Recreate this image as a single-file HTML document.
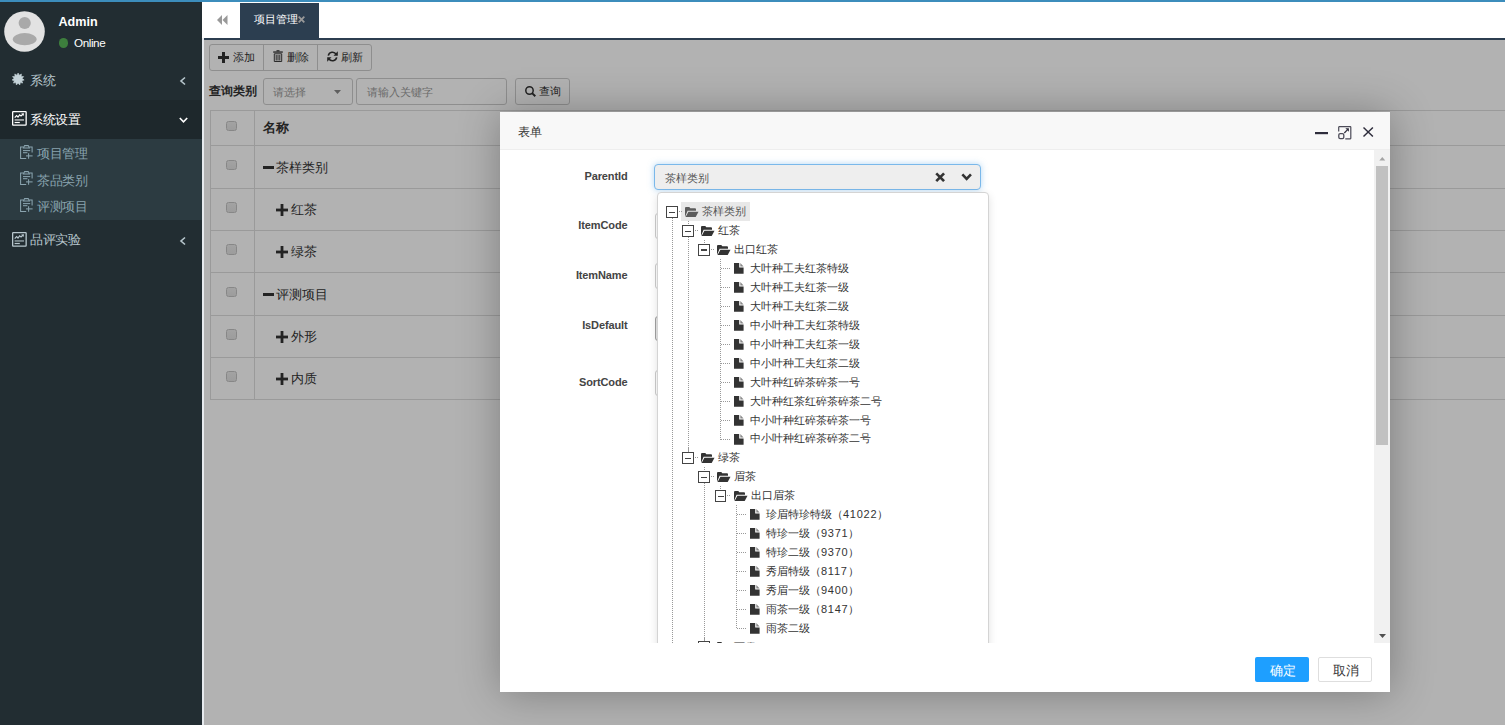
<!DOCTYPE html><html><head><meta charset="utf-8"><title>UI</title><style>
*{margin:0;padding:0;box-sizing:border-box}
html,body{width:1505px;height:725px;overflow:hidden}
body{position:relative;font-family:"Liberation Sans",sans-serif;background:#fff;color:#333}
.ab{position:absolute}
.t{position:absolute;white-space:nowrap}
svg{position:absolute;overflow:visible}
.tr{position:absolute;left:0;width:1301px;border-top:1px solid #ddd}
.cb{position:absolute;left:22px;width:10.8px;height:10.9px;border:1px solid #c2c2c2;border-radius:2.5px;background:linear-gradient(#e9e9e9,#e0e0e0)}
.rowt{position:absolute;font-size:12.6px;line-height:16px;color:#333;white-space:nowrap}
.lbl{position:absolute;width:130px;left:0;text-align:right;font-size:11px;font-weight:bold;line-height:14px;color:#444;letter-spacing:-0.12px}
.inp{position:absolute;left:154.5px;width:326px;height:26px;border:1px solid #ccc;border-radius:3px;background:#fff}
.tn{position:absolute;font-size:10.8px;line-height:14px;color:#333;white-space:nowrap}
.sw{position:absolute;width:12px;height:12px;border:1px solid #444;background:#fff}
.sw:after{content:"";position:absolute;left:2px;top:4.5px;width:6px;height:1.3px;background:#444}
.vl{position:absolute;width:1px;border-left:1px dotted #777}
.hl{position:absolute;height:1px;border-top:1px dotted #777}
</style></head><body>
<div class="ab" style="left:0;top:0;width:1505px;height:2px;background:#3c8dbc"></div>
<div class="ab" style="left:0;top:2px;width:202px;height:723px;background:#222d32"></div>
<svg style="left:4px;top:11px" width="41" height="41" viewBox="0 0 41 41"><circle cx="20.5" cy="20.5" r="20.3" fill="#e2e2e2"/><circle cx="20.7" cy="12" r="6.1" fill="#a9a9a9"/><ellipse cx="20.7" cy="28.2" rx="11.9" ry="6.1" fill="#a9a9a9"/></svg>
<div class="t" style="left:58.4px;top:15px;font-size:12.6px;line-height:14px;font-weight:bold;color:#fff">Admin</div>
<div class="ab" style="left:58.6px;top:38.2px;width:9.5px;height:9.5px;border-radius:50%;background:#3d7e3d"></div>
<div class="t" style="left:74px;top:36.2px;font-size:11.7px;line-height:13px;letter-spacing:-0.42px;color:#fff">Online</div>
<div class="ab" style="left:0;top:100px;width:202px;height:39px;background:#1e282c"></div>
<div class="ab" style="left:0;top:139px;width:202px;height:81px;background:#2c3b41"></div>
<div class="t" style="left:30px;top:73px;font-size:12.6px;line-height:16px;letter-spacing:-0.3px;color:#b8c7ce">系统</div>
<div class="t" style="left:30px;top:112px;font-size:12.6px;line-height:16px;letter-spacing:-0.3px;color:#fff">系统设置</div>
<div class="t" style="left:30px;top:232px;font-size:12.6px;line-height:16px;letter-spacing:-0.3px;color:#b8c7ce">品评实验</div>
<div class="t" style="left:37px;top:146px;font-size:12.6px;line-height:16px;letter-spacing:-0.3px;color:#8aa4af">项目管理</div>
<div class="t" style="left:37px;top:172.5px;font-size:12.6px;line-height:16px;letter-spacing:-0.3px;color:#8aa4af">茶品类别</div>
<div class="t" style="left:37px;top:199px;font-size:12.6px;line-height:16px;letter-spacing:-0.3px;color:#8aa4af">评测项目</div>
<svg style="left:12.2px;top:73.3px" width="12.2" height="12.2" viewBox="0 0 12.2 12.2"><polygon points="6.10,0.00 7.26,2.17 9.40,0.97 9.20,3.42 11.65,3.57 10.16,5.52 12.14,6.97 9.83,7.80 10.71,10.09 8.32,9.55 7.82,11.95 6.10,10.20 4.38,11.95 3.88,9.55 1.49,10.09 2.37,7.80 0.06,6.97 2.04,5.52 0.55,3.57 3.00,3.42 2.80,0.97 4.94,2.17" fill="#c5d3d9" stroke="#c5d3d9" stroke-width="0.6" stroke-linejoin="round"/></svg>
<svg style="left:11.8px;top:111.2px" width="14.8" height="14.8" viewBox="0 0 14.8 14.8"><rect x="0.65" y="0.65" width="13.5" height="13.5" rx="0.6" fill="none" stroke="#fff" stroke-width="1.3"/><polyline points="2.7,6.6 4.6,4.6 6,6 7.6,3.9 9,5 10.9,3.2" fill="none" stroke="#fff" stroke-width="1.2"/><polygon points="9.2,2.4 12,2.2 11.6,5" fill="#fff"/><rect x="2.6" y="8.2" width="9.4" height="1.5" fill="#fff" opacity="0.7"/><rect x="2.6" y="10.9" width="5.2" height="1.2" fill="#fff"/></svg>
<svg style="left:11.8px;top:232px" width="14.8" height="14.8" viewBox="0 0 14.8 14.8"><rect x="0.65" y="0.65" width="13.5" height="13.5" rx="0.6" fill="none" stroke="#b8c7ce" stroke-width="1.3"/><polyline points="2.7,6.6 4.6,4.6 6,6 7.6,3.9 9,5 10.9,3.2" fill="none" stroke="#b8c7ce" stroke-width="1.2"/><polygon points="9.2,2.4 12,2.2 11.6,5" fill="#b8c7ce"/><rect x="2.6" y="8.2" width="9.4" height="1.5" fill="#b8c7ce" opacity="0.7"/><rect x="2.6" y="10.9" width="5.2" height="1.2" fill="#b8c7ce"/></svg>
<svg style="left:20px;top:144.8px" width="13" height="14" viewBox="0 0 13 14" fill="none" stroke="#8aa4af" stroke-width="1.05"><path d="M3.6 1.9 H0.6 V13.4 H6.2"/><path d="M9.2 1.9 H12.1 V7.6"/><path d="M3.4 3 L4.6 0.6 H8.2 L9.4 3 Z"/><path d="M3 5.6 H10.2"/><path d="M3 7.7 H7.4"/><path d="M8.6 8.2 V13.8"/><path d="M6 10.9 H12.6"/></svg>
<svg style="left:20px;top:171.3px" width="13" height="14" viewBox="0 0 13 14" fill="none" stroke="#8aa4af" stroke-width="1.05"><path d="M3.6 1.9 H0.6 V13.4 H6.2"/><path d="M9.2 1.9 H12.1 V7.6"/><path d="M3.4 3 L4.6 0.6 H8.2 L9.4 3 Z"/><path d="M3 5.6 H10.2"/><path d="M3 7.7 H7.4"/><path d="M8.6 8.2 V13.8"/><path d="M6 10.9 H12.6"/></svg>
<svg style="left:20px;top:198px" width="13" height="14" viewBox="0 0 13 14" fill="none" stroke="#8aa4af" stroke-width="1.05"><path d="M3.6 1.9 H0.6 V13.4 H6.2"/><path d="M9.2 1.9 H12.1 V7.6"/><path d="M3.4 3 L4.6 0.6 H8.2 L9.4 3 Z"/><path d="M3 5.6 H10.2"/><path d="M3 7.7 H7.4"/><path d="M8.6 8.2 V13.8"/><path d="M6 10.9 H12.6"/></svg>
<svg style="left:179.5px;top:76.5px" width="6" height="8" viewBox="0 0 6 8"><polyline points="5,0.5 1,4 5,7.5" fill="none" stroke="#b8c7ce" stroke-width="1.6"/></svg>
<svg style="left:179.5px;top:236.5px" width="6" height="8" viewBox="0 0 6 8"><polyline points="5,0.5 1,4 5,7.5" fill="none" stroke="#b8c7ce" stroke-width="1.6"/></svg>
<svg style="left:178.8px;top:116.5px" width="9" height="6" viewBox="0 0 9 6"><polyline points="0.8,1 4.5,4.8 8.2,1" fill="none" stroke="#fff" stroke-width="1.6"/></svg>
<div class="ab" style="left:202px;top:38px;width:2px;height:687px;background:#e6eaee"></div>
<div class="ab" style="left:240px;top:3px;width:79px;height:35px;background:#2c3e50"></div>
<div class="ab" style="left:204px;top:38px;width:1301px;height:2px;background:#2c3e50"></div>
<div class="t" style="left:254px;top:13px;font-size:10.8px;line-height:13px;color:#fff">项目管理</div>
<svg style="left:298px;top:16px" width="7" height="7" viewBox="0 0 7 7"><g stroke="#999" stroke-width="1.8"><line x1="0.7" y1="0.7" x2="6.3" y2="6.3"/><line x1="6.3" y1="0.7" x2="0.7" y2="6.3"/></g></svg>
<svg style="left:217px;top:15px" width="11" height="10" viewBox="0 0 11 10"><polygon points="5,0 5,10 0,5" fill="#999"/><polygon points="10.5,0 10.5,10 5.5,5" fill="#999"/></svg>
<div class="ab" style="left:204px;top:40px;width:1301px;height:685px;background:#fff;overflow:hidden">
<div class="ab" style="left:5px;top:4px;width:162.5px;height:26.5px;border:1px solid #ccc;border-radius:3px;background:#fff"></div>
<div class="ab" style="left:59.2px;top:4px;width:1px;height:26.5px;background:#ccc"></div>
<div class="ab" style="left:113.2px;top:4px;width:1px;height:26.5px;background:#ccc"></div>
<svg style="left:14px;top:12px" width="11" height="11" viewBox="0 0 11 11"><rect x="0" y="4" width="11" height="3" fill="#333"/><rect x="4" y="0" width="3" height="11" fill="#333"/></svg>
<div class="t" style="left:29px;top:10px;font-size:10.8px;line-height:14px;color:#333">添加</div>
<svg style="left:69.4px;top:10px" width="10" height="12" viewBox="0 0 10 12"><rect x="3.5" y="0.2" width="3" height="1.2" fill="#333"/><rect x="0.2" y="1.4" width="9.6" height="1.3" fill="#333"/><path d="M1.3 3.8 H8.7 V11.5 H1.3 Z M3.2 5 V10.5 M5 5 V10.5 M6.8 5 V10.5" fill="none" stroke="#333" stroke-width="0.95"/></svg>
<div class="t" style="left:83px;top:10px;font-size:10.8px;line-height:14px;color:#333">删除</div>
<svg style="left:123.2px;top:11.3px" width="11" height="11" viewBox="0 0 11 11"><path d="M9.2 3.3 A4.3 4.3 0 0 0 1.3 4.6" fill="none" stroke="#333" stroke-width="1.6"/><path d="M1.8 7.7 A4.3 4.3 0 0 0 9.7 6.4" fill="none" stroke="#333" stroke-width="1.6"/><polygon points="10.8,0.3 10.8,4.8 6.5,4.8" fill="#333"/><polygon points="0.2,10.7 0.2,6.2 4.5,6.2" fill="#333"/></svg>
<div class="t" style="left:137px;top:10px;font-size:10.8px;line-height:14px;color:#333">刷新</div>
<div class="t" style="left:4.8px;top:43px;font-size:12.2px;line-height:16px;font-weight:bold;color:#333">查询类别</div>
<div class="ab" style="left:59px;top:38px;width:89.5px;height:26.5px;border:1px solid #ccc;border-radius:3px;background:#fff"></div>
<div class="t" style="left:68.5px;top:45px;font-size:10.8px;line-height:14px;color:#999">请选择</div>
<svg style="left:130px;top:50px" width="7" height="4" viewBox="0 0 7 4"><polygon points="0,0 7,0 3.5,4" fill="#888"/></svg>
<div class="ab" style="left:152px;top:38px;width:150.5px;height:26.5px;border:1px solid #ccc;border-radius:3px;background:#fff"></div>
<div class="t" style="left:162.5px;top:45px;font-size:10.8px;line-height:14px;color:#999">请输入关键字</div>
<div class="ab" style="left:311px;top:38px;width:55px;height:26.5px;border:1px solid #ccc;border-radius:3px;background:#fff"></div>
<svg style="left:320.8px;top:45.5px" width="11" height="11" viewBox="0 0 11 11"><circle cx="4.5" cy="4.5" r="3.7" fill="none" stroke="#333" stroke-width="1.5"/><line x1="7.1" y1="7.1" x2="10.3" y2="10.3" stroke="#333" stroke-width="2"/></svg>
<div class="t" style="left:334.6px;top:44.2px;font-size:10.8px;line-height:14px;color:#333">查询</div>
<div class="ab" style="left:5.5px;top:70px;width:1300px;height:1px;background:#ddd"></div>
<div class="ab" style="left:5.5px;top:105px;width:1300px;height:1px;background:#ddd"></div>
<div class="ab" style="left:5.5px;top:148px;width:1300px;height:1px;background:#ddd"></div>
<div class="ab" style="left:5.5px;top:190px;width:1300px;height:1px;background:#ddd"></div>
<div class="ab" style="left:5.5px;top:232px;width:1300px;height:1px;background:#ddd"></div>
<div class="ab" style="left:5.5px;top:275px;width:1300px;height:1px;background:#ddd"></div>
<div class="ab" style="left:5.5px;top:317px;width:1300px;height:1px;background:#ddd"></div>
<div class="ab" style="left:5.5px;top:359px;width:1300px;height:1px;background:#ddd"></div>
<div class="ab" style="left:5.5px;top:70px;width:1px;height:289px;background:#ddd"></div>
<div class="ab" style="left:50px;top:70px;width:1px;height:289px;background:#ddd"></div>
<div class="cb" style="top:80.6px"></div>
<div class="cb" style="top:119.6px"></div>
<div class="cb" style="top:162.1px"></div>
<div class="cb" style="top:204.1px"></div>
<div class="cb" style="top:246.6px"></div>
<div class="cb" style="top:289.1px"></div>
<div class="cb" style="top:331.1px"></div>
<div class="rowt" style="left:58.5px;top:80px;font-weight:bold">名称</div>
<div class="ab" style="left:59.4px;top:126.4px;width:10.5px;height:2.6px;background:#333"></div>
<div class="rowt" style="left:72.3px;top:119.7px">茶样类别</div>
<svg style="left:72.0px;top:164.2px" width="12" height="12" viewBox="0 0 12 12"><rect x="0" y="4.6" width="12" height="2.8" fill="#333"/><rect x="4.6" y="0" width="2.8" height="12" fill="#333"/></svg>
<div class="rowt" style="left:86.6px;top:162.2px">红茶</div>
<svg style="left:72.0px;top:206.2px" width="12" height="12" viewBox="0 0 12 12"><rect x="0" y="4.6" width="12" height="2.8" fill="#333"/><rect x="4.6" y="0" width="2.8" height="12" fill="#333"/></svg>
<div class="rowt" style="left:86.6px;top:204.2px">绿茶</div>
<div class="ab" style="left:59.4px;top:253.39999999999998px;width:10.5px;height:2.6px;background:#333"></div>
<div class="rowt" style="left:72.3px;top:246.7px">评测项目</div>
<svg style="left:72.0px;top:291.2px" width="12" height="12" viewBox="0 0 12 12"><rect x="0" y="4.6" width="12" height="2.8" fill="#333"/><rect x="4.6" y="0" width="2.8" height="12" fill="#333"/></svg>
<div class="rowt" style="left:86.6px;top:289.2px">外形</div>
<svg style="left:72.0px;top:333.2px" width="12" height="12" viewBox="0 0 12 12"><rect x="0" y="4.6" width="12" height="2.8" fill="#333"/><rect x="4.6" y="0" width="2.8" height="12" fill="#333"/></svg>
<div class="rowt" style="left:86.6px;top:331.2px">内质</div>
</div>
<div class="ab" style="left:204px;top:40px;width:1301px;height:685px;background:rgba(0,0,0,.3)"></div>
<div class="ab" style="left:500px;top:112px;width:890px;height:580px;background:#fff;box-shadow:1px 1px 40px rgba(0,0,0,.3)">
<div class="ab" style="left:0;top:0;width:890px;height:38px;background:#f8f8f8;border-bottom:1px solid #eee"></div>
<div class="t" style="left:18px;top:11.8px;font-size:12.3px;line-height:16px;color:#333">表单</div>
<svg style="left:815px;top:19.5px" width="13" height="2" viewBox="0 0 13 2"><rect width="13" height="2.2" fill="#2e2d3c"/></svg>
<svg style="left:837.6px;top:13.6px" width="13.5" height="13.5" viewBox="0 0 13.5 13.5"><path d="M0.7 5.5 V1.2 Q0.7 0.7 1.2 0.7 H12.3 Q12.8 0.7 12.8 1.2 V12.3 Q12.8 12.8 12.3 12.8 H7.3" fill="none" stroke="#2e2d3c" stroke-width="1.2" opacity="0.85"/><rect x="0.8" y="7.6" width="5" height="5" rx="1.4" fill="none" stroke="#2e2d3c" stroke-width="1.3" opacity="0.85"/><line x1="6.3" y1="7" x2="9.6" y2="3.7" stroke="#2e2d3c" stroke-width="1.2"/><polygon points="7.4,2.3 10.9,2.3 10.9,5.8" fill="#2e2d3c"/></svg>
<svg style="left:863px;top:15.2px" width="10.4" height="9.9" viewBox="0 0 10.4 9.9"><g stroke="#2e2d3c" stroke-width="1.45"><line x1="0.5" y1="0.4" x2="9.9" y2="9.5"/><line x1="9.9" y1="0.4" x2="0.5" y2="9.5"/></g></svg>
<div class="ab" style="left:0;top:38px;width:890px;height:493px;overflow:hidden;background:#fff">
<div class="lbl" style="left:0;width:127.5px;top:19.19999999999999px">ParentId</div>
<div class="lbl" style="left:0;width:127.5px;top:68.30000000000001px">ItemCode</div>
<div class="lbl" style="left:0;width:127.5px;top:118px">ItemName</div>
<div class="lbl" style="left:0;width:127.5px;top:167.5px">IsDefault</div>
<div class="lbl" style="left:0;width:127.5px;top:225px">SortCode</div>
<div class="inp" style="top:63.3px"></div>
<div class="inp" style="top:112.5px"></div>
<div class="inp" style="top:219.7px"></div>
<div class="inp" style="top:165.9px;border-color:#a0a0a0;background:#e6e6e6;height:25.5px"></div>
<div class="ab" style="left:154px;top:13.8px;width:326.6px;height:26.5px;border:1px solid #7ab8ea;border-radius:4px;background:#eee;box-shadow:0 0 6px rgba(102,175,233,.5)"></div>
<div class="tn" style="left:164.6px;top:21px;color:#555">茶样类别</div>
<svg style="left:435.2px;top:22px" width="10.3" height="10.5" viewBox="0 0 10 10"><g stroke="#333" stroke-width="2.6"><line x1="1.2" y1="1.2" x2="8.8" y2="8.8"/><line x1="8.8" y1="1.2" x2="1.2" y2="8.8"/></g></svg>
<svg style="left:461px;top:23px" width="11.3" height="8" viewBox="0 0 11 8"><polyline points="1.2,1.3 5.5,5.8 9.8,1.3" fill="none" stroke="#333" stroke-width="2.6"/></svg>
<div class="ab" style="left:156.9px;top:42.2px;width:332.3px;height:470px;border:1px solid #d4d4d4;border-radius:4px;background:#fff;box-shadow:0 3px 8px rgba(0,0,0,.12)">
<div class="ab" style="left:23.5px;top:9.0px;width:68.8px;height:18.7px;background:#e8e8e8"></div>
<div class="ab" style="left:13.7px;top:24.8px;width:1px;height:442px;background-image:linear-gradient(#999 50%,transparent 50%);background-size:1px 2px"></div>
<div class="ab" style="left:29.9px;top:27.5px;width:1px;height:231.49px;background-image:linear-gradient(#999 50%,transparent 50%);background-size:1px 2px"></div>
<div class="ab" style="left:46.1px;top:47.06px;width:1px;height:3.7px;background-image:linear-gradient(#999 50%,transparent 50%);background-size:1px 2px"></div>
<div class="ab" style="left:62.3px;top:65.99px;width:1px;height:180.37px;background-image:linear-gradient(#999 50%,transparent 50%);background-size:1px 2px"></div>
<div class="ab" style="left:29.9px;top:255.29px;width:1px;height:3.7px;background-image:linear-gradient(#999 50%,transparent 50%);background-size:1px 2px"></div>
<div class="ab" style="left:46.1px;top:274.22px;width:1px;height:174.07px;background-image:linear-gradient(#999 50%,transparent 50%);background-size:1px 2px"></div>
<div class="ab" style="left:62.3px;top:293.15px;width:1px;height:3.7px;background-image:linear-gradient(#999 50%,transparent 50%);background-size:1px 2px"></div>
<div class="ab" style="left:78.5px;top:312.08px;width:1px;height:123.58px;background-image:linear-gradient(#999 50%,transparent 50%);background-size:1px 2px"></div>
<div class="ab" style="left:46.1px;top:444.59px;width:1px;height:3.7px;background-image:linear-gradient(#999 50%,transparent 50%);background-size:1px 2px"></div>
<div class="sw" style="left:8.2px;top:12.9px;width:11.6px;height:11.6px"></div>
<div class="ab" style="left:20.7px;top:18.2px;width:4.0px;height:1px;background-image:linear-gradient(90deg,#999 50%,transparent 50%);background-size:2px 1px"></div>
<svg style="left:27.2px;top:13.7px" width="13.5" height="10" viewBox="0 0 13.5 10"><path d="M0,10 V1 Q0,0 1,0 H4.3 L5.3,1.3 H10 Q11,1.3 11,2.3 V3.8 H2.6 Z" fill="#5c5c5c"/><path d="M3.4,4.7 H13.5 L10.7,10 H0.6 Z" fill="#5c5c5c"/></svg>
<div class="tn" style="left:44.1px;top:11.0px;color:#555">茶样类别</div>
<div class="sw" style="left:24.4px;top:31.83px;width:11.6px;height:11.6px"></div>
<div class="ab" style="left:36.9px;top:37.13px;width:4.0px;height:1px;background-image:linear-gradient(90deg,#999 50%,transparent 50%);background-size:2px 1px"></div>
<svg style="left:43.4px;top:32.63px" width="13.5" height="10" viewBox="0 0 13.5 10"><path d="M0,10 V1 Q0,0 1,0 H4.3 L5.3,1.3 H10 Q11,1.3 11,2.3 V3.8 H2.6 Z" fill="#333"/><path d="M3.4,4.7 H13.5 L10.7,10 H0.6 Z" fill="#333"/></svg>
<div class="tn" style="left:60.3px;top:29.93px;color:#333">红茶</div>
<div class="sw" style="left:40.6px;top:50.76px;width:11.6px;height:11.6px"></div>
<div class="ab" style="left:53.1px;top:56.06px;width:4.0px;height:1px;background-image:linear-gradient(90deg,#999 50%,transparent 50%);background-size:2px 1px"></div>
<svg style="left:59.6px;top:51.56px" width="13.5" height="10" viewBox="0 0 13.5 10"><path d="M0,10 V1 Q0,0 1,0 H4.3 L5.3,1.3 H10 Q11,1.3 11,2.3 V3.8 H2.6 Z" fill="#333"/><path d="M3.4,4.7 H13.5 L10.7,10 H0.6 Z" fill="#333"/></svg>
<div class="tn" style="left:76.5px;top:48.86px;color:#333">出口红茶</div>
<div class="ab" style="left:63.3px;top:74.99px;width:8.5px;height:1px;background-image:linear-gradient(90deg,#999 50%,transparent 50%);background-size:2px 1px"></div>
<svg style="left:76.4px;top:70.19px" width="9.6" height="10.7" viewBox="0 0 9.6 10.7"><path d="M0,0 H5.2 V4.5 H9.6 V10.7 H0 Z" fill="#333"/><path d="M6.3,0 L9.6,3.4 H6.3 Z" fill="#888"/></svg>
<div class="tn" style="left:91.9px;top:67.89px">大叶种工夫红茶特级</div>
<div class="ab" style="left:63.3px;top:93.92px;width:8.5px;height:1px;background-image:linear-gradient(90deg,#999 50%,transparent 50%);background-size:2px 1px"></div>
<svg style="left:76.4px;top:89.12px" width="9.6" height="10.7" viewBox="0 0 9.6 10.7"><path d="M0,0 H5.2 V4.5 H9.6 V10.7 H0 Z" fill="#333"/><path d="M6.3,0 L9.6,3.4 H6.3 Z" fill="#888"/></svg>
<div class="tn" style="left:91.9px;top:86.82px">大叶种工夫红茶一级</div>
<div class="ab" style="left:63.3px;top:112.85px;width:8.5px;height:1px;background-image:linear-gradient(90deg,#999 50%,transparent 50%);background-size:2px 1px"></div>
<svg style="left:76.4px;top:108.05px" width="9.6" height="10.7" viewBox="0 0 9.6 10.7"><path d="M0,0 H5.2 V4.5 H9.6 V10.7 H0 Z" fill="#333"/><path d="M6.3,0 L9.6,3.4 H6.3 Z" fill="#888"/></svg>
<div class="tn" style="left:91.9px;top:105.75px">大叶种工夫红茶二级</div>
<div class="ab" style="left:63.3px;top:131.78px;width:8.5px;height:1px;background-image:linear-gradient(90deg,#999 50%,transparent 50%);background-size:2px 1px"></div>
<svg style="left:76.4px;top:126.98px" width="9.6" height="10.7" viewBox="0 0 9.6 10.7"><path d="M0,0 H5.2 V4.5 H9.6 V10.7 H0 Z" fill="#333"/><path d="M6.3,0 L9.6,3.4 H6.3 Z" fill="#888"/></svg>
<div class="tn" style="left:91.9px;top:124.68px">中小叶种工夫红茶特级</div>
<div class="ab" style="left:63.3px;top:150.71px;width:8.5px;height:1px;background-image:linear-gradient(90deg,#999 50%,transparent 50%);background-size:2px 1px"></div>
<svg style="left:76.4px;top:145.91px" width="9.6" height="10.7" viewBox="0 0 9.6 10.7"><path d="M0,0 H5.2 V4.5 H9.6 V10.7 H0 Z" fill="#333"/><path d="M6.3,0 L9.6,3.4 H6.3 Z" fill="#888"/></svg>
<div class="tn" style="left:91.9px;top:143.61px">中小叶种工夫红茶一级</div>
<div class="ab" style="left:63.3px;top:169.64px;width:8.5px;height:1px;background-image:linear-gradient(90deg,#999 50%,transparent 50%);background-size:2px 1px"></div>
<svg style="left:76.4px;top:164.84px" width="9.6" height="10.7" viewBox="0 0 9.6 10.7"><path d="M0,0 H5.2 V4.5 H9.6 V10.7 H0 Z" fill="#333"/><path d="M6.3,0 L9.6,3.4 H6.3 Z" fill="#888"/></svg>
<div class="tn" style="left:91.9px;top:162.54px">中小叶种工夫红茶二级</div>
<div class="ab" style="left:63.3px;top:188.57px;width:8.5px;height:1px;background-image:linear-gradient(90deg,#999 50%,transparent 50%);background-size:2px 1px"></div>
<svg style="left:76.4px;top:183.77px" width="9.6" height="10.7" viewBox="0 0 9.6 10.7"><path d="M0,0 H5.2 V4.5 H9.6 V10.7 H0 Z" fill="#333"/><path d="M6.3,0 L9.6,3.4 H6.3 Z" fill="#888"/></svg>
<div class="tn" style="left:91.9px;top:181.47px">大叶种红碎茶碎茶一号</div>
<div class="ab" style="left:63.3px;top:207.5px;width:8.5px;height:1px;background-image:linear-gradient(90deg,#999 50%,transparent 50%);background-size:2px 1px"></div>
<svg style="left:76.4px;top:202.7px" width="9.6" height="10.7" viewBox="0 0 9.6 10.7"><path d="M0,0 H5.2 V4.5 H9.6 V10.7 H0 Z" fill="#333"/><path d="M6.3,0 L9.6,3.4 H6.3 Z" fill="#888"/></svg>
<div class="tn" style="left:91.9px;top:200.4px">大叶种红茶红碎茶碎茶二号</div>
<div class="ab" style="left:63.3px;top:226.43px;width:8.5px;height:1px;background-image:linear-gradient(90deg,#999 50%,transparent 50%);background-size:2px 1px"></div>
<svg style="left:76.4px;top:221.63px" width="9.6" height="10.7" viewBox="0 0 9.6 10.7"><path d="M0,0 H5.2 V4.5 H9.6 V10.7 H0 Z" fill="#333"/><path d="M6.3,0 L9.6,3.4 H6.3 Z" fill="#888"/></svg>
<div class="tn" style="left:91.9px;top:219.33px">中小叶种红碎茶碎茶一号</div>
<div class="ab" style="left:63.3px;top:245.36px;width:8.5px;height:1px;background-image:linear-gradient(90deg,#999 50%,transparent 50%);background-size:2px 1px"></div>
<svg style="left:76.4px;top:240.56px" width="9.6" height="10.7" viewBox="0 0 9.6 10.7"><path d="M0,0 H5.2 V4.5 H9.6 V10.7 H0 Z" fill="#333"/><path d="M6.3,0 L9.6,3.4 H6.3 Z" fill="#888"/></svg>
<div class="tn" style="left:91.9px;top:238.26px">中小叶种红碎茶碎茶二号</div>
<div class="sw" style="left:24.4px;top:258.99px;width:11.6px;height:11.6px"></div>
<div class="ab" style="left:36.9px;top:264.29px;width:4.0px;height:1px;background-image:linear-gradient(90deg,#999 50%,transparent 50%);background-size:2px 1px"></div>
<svg style="left:43.4px;top:259.79px" width="13.5" height="10" viewBox="0 0 13.5 10"><path d="M0,10 V1 Q0,0 1,0 H4.3 L5.3,1.3 H10 Q11,1.3 11,2.3 V3.8 H2.6 Z" fill="#333"/><path d="M3.4,4.7 H13.5 L10.7,10 H0.6 Z" fill="#333"/></svg>
<div class="tn" style="left:60.3px;top:257.09px;color:#333">绿茶</div>
<div class="sw" style="left:40.6px;top:277.92px;width:11.6px;height:11.6px"></div>
<div class="ab" style="left:53.1px;top:283.22px;width:4.0px;height:1px;background-image:linear-gradient(90deg,#999 50%,transparent 50%);background-size:2px 1px"></div>
<svg style="left:59.6px;top:278.72px" width="13.5" height="10" viewBox="0 0 13.5 10"><path d="M0,10 V1 Q0,0 1,0 H4.3 L5.3,1.3 H10 Q11,1.3 11,2.3 V3.8 H2.6 Z" fill="#333"/><path d="M3.4,4.7 H13.5 L10.7,10 H0.6 Z" fill="#333"/></svg>
<div class="tn" style="left:76.5px;top:276.02px;color:#333">眉茶</div>
<div class="sw" style="left:56.8px;top:296.85px;width:11.6px;height:11.6px"></div>
<div class="ab" style="left:69.3px;top:302.15px;width:4.0px;height:1px;background-image:linear-gradient(90deg,#999 50%,transparent 50%);background-size:2px 1px"></div>
<svg style="left:75.8px;top:297.65px" width="13.5" height="10" viewBox="0 0 13.5 10"><path d="M0,10 V1 Q0,0 1,0 H4.3 L5.3,1.3 H10 Q11,1.3 11,2.3 V3.8 H2.6 Z" fill="#333"/><path d="M3.4,4.7 H13.5 L10.7,10 H0.6 Z" fill="#333"/></svg>
<div class="tn" style="left:92.7px;top:294.95px;color:#333">出口眉茶</div>
<div class="ab" style="left:79.5px;top:321.08px;width:8.5px;height:1px;background-image:linear-gradient(90deg,#999 50%,transparent 50%);background-size:2px 1px"></div>
<svg style="left:92.6px;top:316.28px" width="9.6" height="10.7" viewBox="0 0 9.6 10.7"><path d="M0,0 H5.2 V4.5 H9.6 V10.7 H0 Z" fill="#333"/><path d="M6.3,0 L9.6,3.4 H6.3 Z" fill="#888"/></svg>
<div class="tn" style="left:108.1px;top:313.98px">珍眉特珍特级（<span style="font-size:11px;letter-spacing:0.75px">41022</span>）</div>
<div class="ab" style="left:79.5px;top:340.01px;width:8.5px;height:1px;background-image:linear-gradient(90deg,#999 50%,transparent 50%);background-size:2px 1px"></div>
<svg style="left:92.6px;top:335.21px" width="9.6" height="10.7" viewBox="0 0 9.6 10.7"><path d="M0,0 H5.2 V4.5 H9.6 V10.7 H0 Z" fill="#333"/><path d="M6.3,0 L9.6,3.4 H6.3 Z" fill="#888"/></svg>
<div class="tn" style="left:108.1px;top:332.91px">特珍一级（<span style="font-size:11px;letter-spacing:0.75px">9371</span>）</div>
<div class="ab" style="left:79.5px;top:358.94px;width:8.5px;height:1px;background-image:linear-gradient(90deg,#999 50%,transparent 50%);background-size:2px 1px"></div>
<svg style="left:92.6px;top:354.14px" width="9.6" height="10.7" viewBox="0 0 9.6 10.7"><path d="M0,0 H5.2 V4.5 H9.6 V10.7 H0 Z" fill="#333"/><path d="M6.3,0 L9.6,3.4 H6.3 Z" fill="#888"/></svg>
<div class="tn" style="left:108.1px;top:351.84px">特珍二级（<span style="font-size:11px;letter-spacing:0.75px">9370</span>）</div>
<div class="ab" style="left:79.5px;top:377.87px;width:8.5px;height:1px;background-image:linear-gradient(90deg,#999 50%,transparent 50%);background-size:2px 1px"></div>
<svg style="left:92.6px;top:373.07px" width="9.6" height="10.7" viewBox="0 0 9.6 10.7"><path d="M0,0 H5.2 V4.5 H9.6 V10.7 H0 Z" fill="#333"/><path d="M6.3,0 L9.6,3.4 H6.3 Z" fill="#888"/></svg>
<div class="tn" style="left:108.1px;top:370.77px">秀眉特级（<span style="font-size:11px;letter-spacing:0.75px">8117</span>）</div>
<div class="ab" style="left:79.5px;top:396.8px;width:8.5px;height:1px;background-image:linear-gradient(90deg,#999 50%,transparent 50%);background-size:2px 1px"></div>
<svg style="left:92.6px;top:392.0px" width="9.6" height="10.7" viewBox="0 0 9.6 10.7"><path d="M0,0 H5.2 V4.5 H9.6 V10.7 H0 Z" fill="#333"/><path d="M6.3,0 L9.6,3.4 H6.3 Z" fill="#888"/></svg>
<div class="tn" style="left:108.1px;top:389.7px">秀眉一级（<span style="font-size:11px;letter-spacing:0.75px">9400</span>）</div>
<div class="ab" style="left:79.5px;top:415.73px;width:8.5px;height:1px;background-image:linear-gradient(90deg,#999 50%,transparent 50%);background-size:2px 1px"></div>
<svg style="left:92.6px;top:410.93px" width="9.6" height="10.7" viewBox="0 0 9.6 10.7"><path d="M0,0 H5.2 V4.5 H9.6 V10.7 H0 Z" fill="#333"/><path d="M6.3,0 L9.6,3.4 H6.3 Z" fill="#888"/></svg>
<div class="tn" style="left:108.1px;top:408.63px">雨茶一级（<span style="font-size:11px;letter-spacing:0.75px">8147</span>）</div>
<div class="ab" style="left:79.5px;top:434.66px;width:8.5px;height:1px;background-image:linear-gradient(90deg,#999 50%,transparent 50%);background-size:2px 1px"></div>
<svg style="left:92.6px;top:429.86px" width="9.6" height="10.7" viewBox="0 0 9.6 10.7"><path d="M0,0 H5.2 V4.5 H9.6 V10.7 H0 Z" fill="#333"/><path d="M6.3,0 L9.6,3.4 H6.3 Z" fill="#888"/></svg>
<div class="tn" style="left:108.1px;top:427.56px">雨茶二级</div>
<div class="sw" style="left:40.6px;top:448.29px;width:11.6px;height:11.6px"></div>
<div class="ab" style="left:53.1px;top:453.59px;width:4.0px;height:1px;background-image:linear-gradient(90deg,#999 50%,transparent 50%);background-size:2px 1px"></div>
<svg style="left:59.6px;top:449.09px" width="13.5" height="10" viewBox="0 0 13.5 10"><path d="M0,10 V1 Q0,0 1,0 H4.3 L5.3,1.3 H10 Q11,1.3 11,2.3 V3.8 H2.6 Z" fill="#333"/><path d="M3.4,4.7 H13.5 L10.7,10 H0.6 Z" fill="#333"/></svg>
<div class="tn" style="left:76.5px;top:446.39px;color:#333">雨雾</div>
</div>
</div>
<div class="ab" style="left:874px;top:38px;width:16px;height:493px;background:#f1f1f1"></div>
<div class="ab" style="left:876px;top:53.7px;width:12px;height:279.1px;background:#c1c1c1"></div>
<svg style="left:878.8px;top:44.6px" width="6.6" height="3.4" viewBox="0 0 7 4"><polygon points="3.5,0 7,4 0,4" fill="#a3a3a3"/></svg>
<svg style="left:879px;top:522px" width="7" height="4" viewBox="0 0 7 4"><polygon points="0,0 7,0 3.5,4" fill="#505050"/></svg>
<div class="ab" style="left:755px;top:545px;width:54px;height:25px;background:#1e9fff;border-radius:2px"></div>
<div class="t" style="left:769.5px;top:550.5px;font-size:12.6px;line-height:16px;color:#fff">确定</div>
<div class="ab" style="left:818px;top:545px;width:54px;height:25px;background:#fff;border:1px solid #dedede;border-radius:2px"></div>
<div class="t" style="left:832.5px;top:550.5px;font-size:12.6px;line-height:16px;color:#333">取消</div>
</div>
</body></html>
